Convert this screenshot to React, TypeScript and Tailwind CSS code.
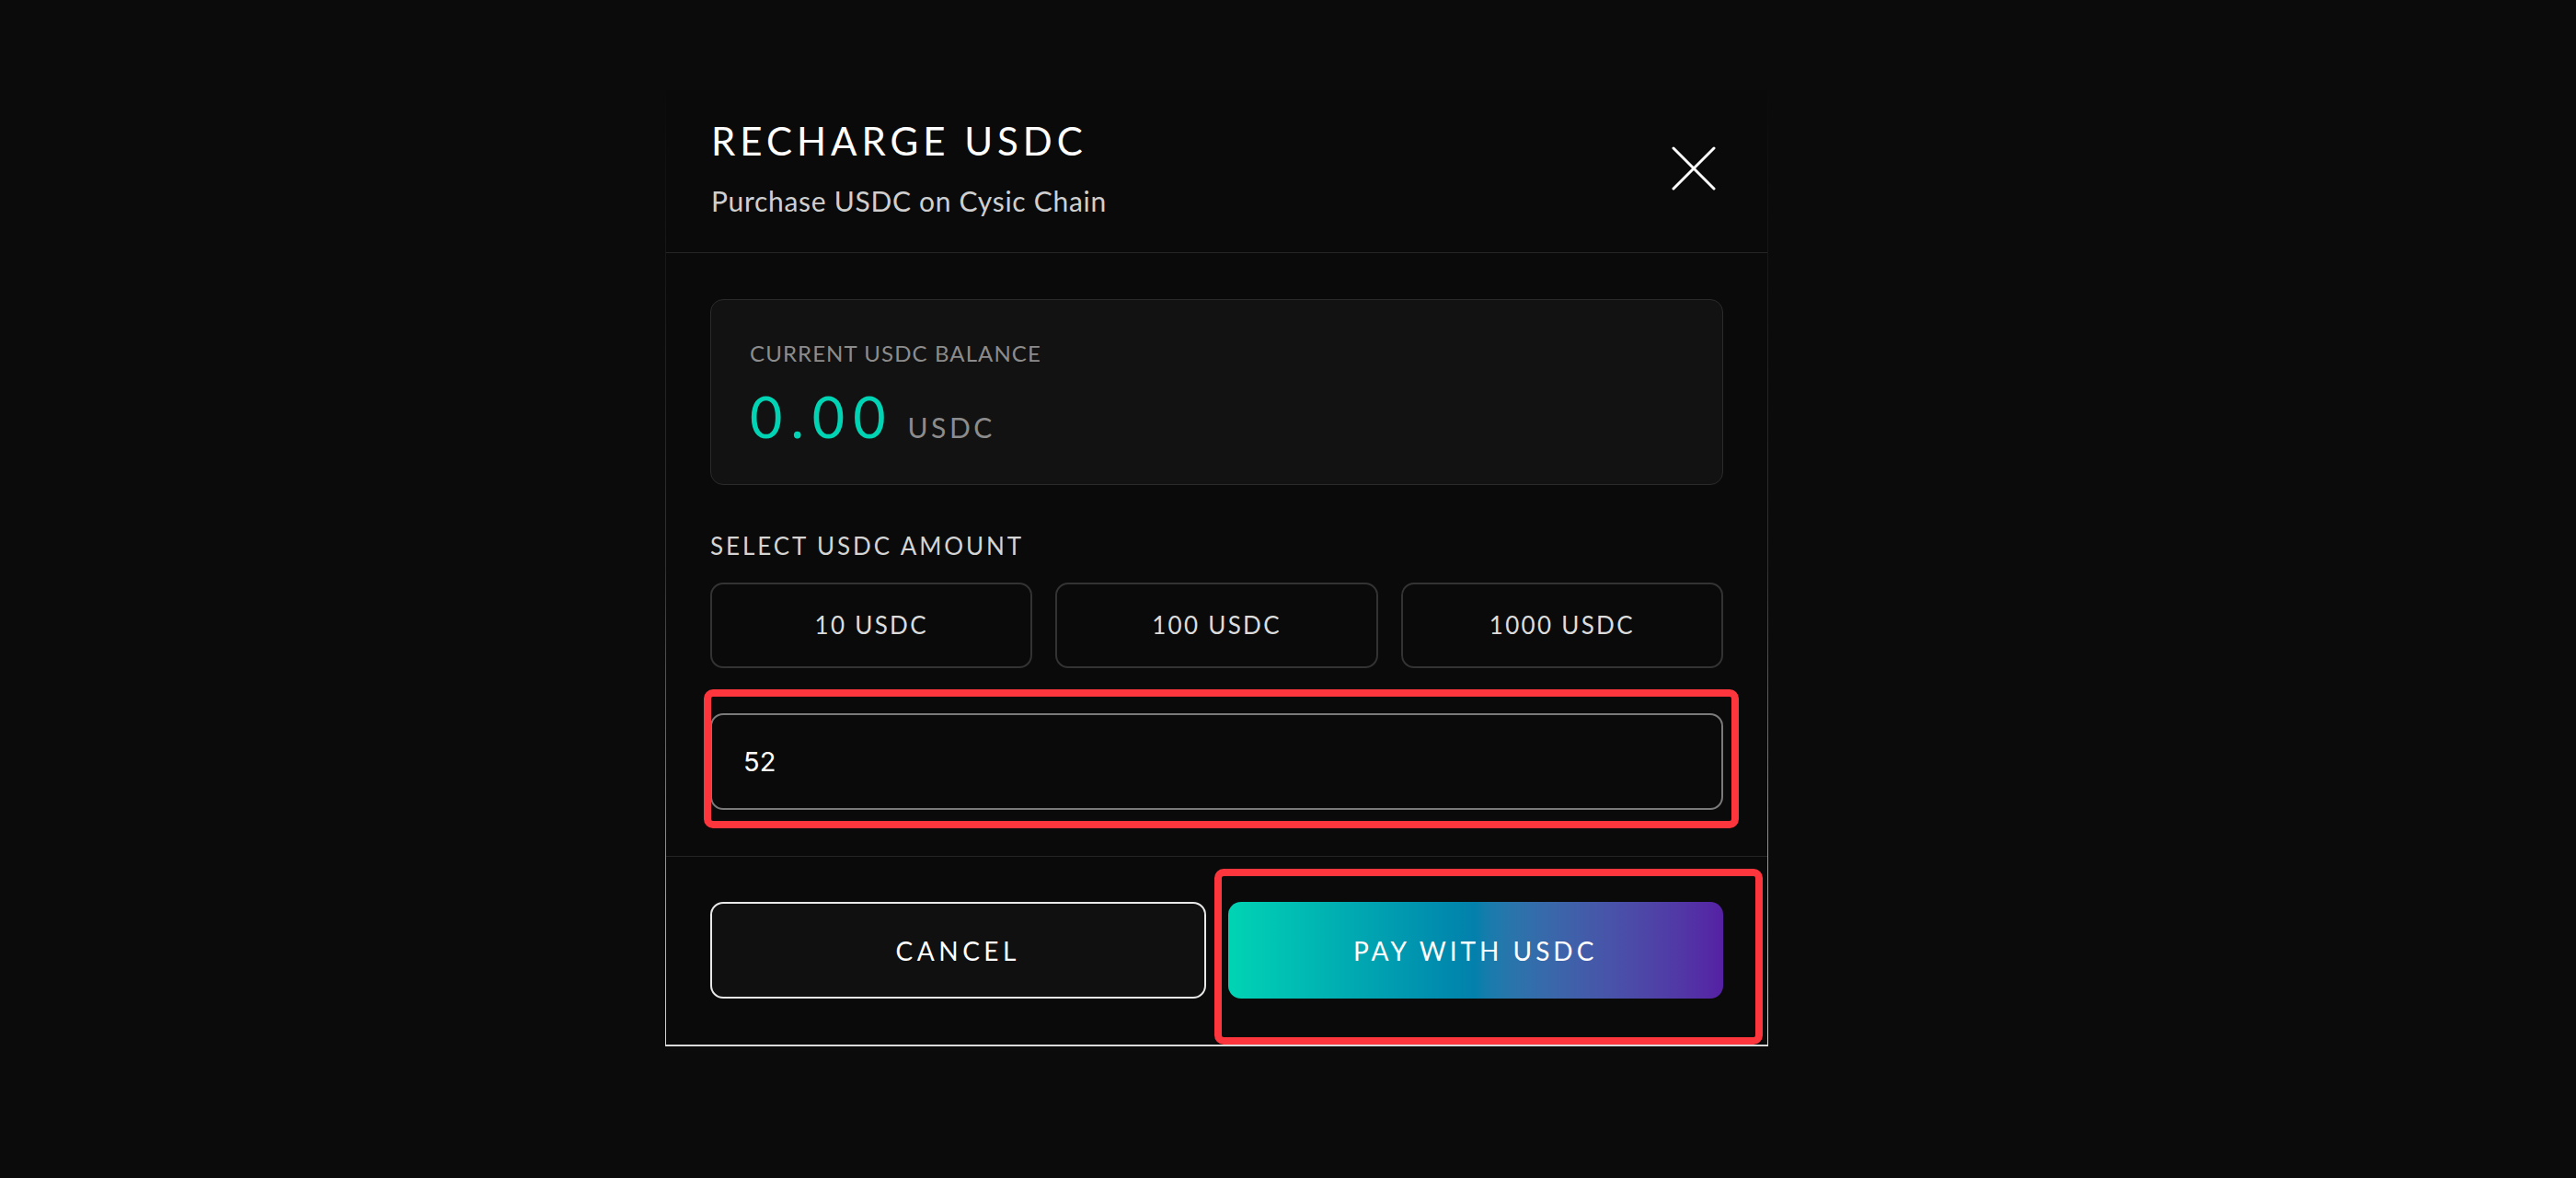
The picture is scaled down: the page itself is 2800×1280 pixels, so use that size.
import React, { useState } from 'react';

const amounts = ['10 USDC', '100 USDC', '1000 USDC'];

const CloseIcon = () => (
  <svg width="48" height="48" viewBox="0 0 48 48" fill="none">
    <path d="M2 2 L46 46 M46 2 L2 46" stroke="#ffffff" strokeWidth="3" strokeLinecap="round" />
  </svg>
);

export default function App() {
  const [value, setValue] = useState('52');

  return (
    <div
      className="min-h-screen w-full bg-[#0b0b0b] pl-[723px] pt-[98px] pb-[140px]"
      style={{ fontFamily: 'Lato, "Liberation Sans", sans-serif' }}
    >
      {/* modal frame: border fades in from the top */}
      <div className="w-[1199px] bg-gradient-to-b from-[#0b0b0b] via-[#333333] to-[#d9d9d9] px-px pb-[2px]">
        <div className="bg-[#0a0a0a]">
          {/* header */}
          <div className="flex items-center justify-between border-b border-[#252525] pl-[49px] pr-[56px] pt-[34px] pb-[41px]">
            <div>
              <h2 className="text-[42px] leading-none text-white tracking-[5px]">RECHARGE USDC</h2>
              <p className="mt-[29px] text-[30px] leading-none text-[#cfcfcf] tracking-[0.7px]">Purchase USDC on Cysic Chain</p>
            </div>
            <button className="flex h-[48px] w-[48px] items-center justify-center">
              <CloseIcon />
            </button>
          </div>

          {/* body */}
          <div className="px-[48px] pt-[50px] pb-[50px]">
            <div className="rounded-[14px] border border-[#2b2b2b] bg-[#121212] px-[42px] pt-[46px] pb-[43px]">
              <div className="text-[24px] leading-none text-[#8c8c8c] tracking-[1.1px]">CURRENT USDC BALANCE</div>
              <div className="mt-[26px] flex items-baseline gap-[15px]">
                <span className="text-[61px] leading-none text-[#00d4b4] tracking-[9px]">0.00</span>
                <span className="text-[30px] leading-none text-[#8c8c8c] tracking-[3.5px]">USDC</span>
              </div>
            </div>

            <div className="mt-[53px] text-[26px] leading-none text-[#d4d4d4] tracking-[2.9px]">SELECT USDC AMOUNT</div>

            <div className="mt-[27px] grid grid-cols-3 gap-[25px]">
              {amounts.map((a) => (
                <button
                  key={a}
                  className="h-[93px] rounded-[14px] border-2 border-[#333333] bg-[#0a0a0a] text-[26px] text-[#dcdcdc] tracking-[2.3px]"
                >
                  {a}
                </button>
              ))}
            </div>

            <div className="relative mt-[49px]">
              <input
                value={value}
                onChange={(e) => setValue(e.target.value)}
                className="h-[105px] w-full rounded-[14px] border-2 border-[#7a7a7a] bg-[#0a0a0a] pl-[34px] text-[29px] text-white outline-none"
                style={{ fontFamily: 'Inter, "Liberation Sans", sans-serif' }}
              />
              {/* annotation box */}
              <div className="pointer-events-none absolute -left-[7px] -top-[26px] -right-[17px] -bottom-[20px] rounded-[10px] border-[8px] border-[#fd363d]" />
            </div>
          </div>

          {/* footer */}
          <div className="grid grid-cols-2 gap-6 border-t border-[#252525] px-[48px] pt-[49px] pb-[50px]">
            <button className="h-[105px] rounded-[14px] border-2 border-[#e8e8e8] bg-[#101010] text-[28px] text-white tracking-[4.5px]">
              CANCEL
            </button>
            <div className="relative">
              <button className="h-[105px] w-full rounded-[14px] bg-gradient-to-r from-[#00d4b4] via-[#0380ac] to-[#5520a4] text-[28px] text-white tracking-[4px]">
                PAY WITH USDC
              </button>
              <div className="pointer-events-none absolute -left-[15px] -top-[36px] -right-[43px] -bottom-[50px] rounded-[10px] border-[8px] border-[#fd363d]" />
            </div>
          </div>
        </div>
      </div>
    </div>
  );
}
